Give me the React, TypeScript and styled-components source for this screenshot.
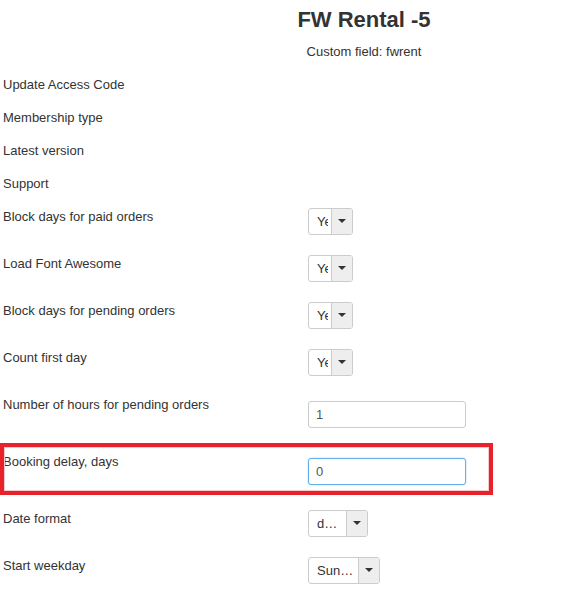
import React from "react";
import styled, { createGlobalStyle } from "styled-components";

const GlobalStyle = createGlobalStyle`
  html, body {
    margin: 0;
    padding: 0;
    background: #ffffff;
  }
  body {
    font-family: "Liberation Sans", Arial, Helvetica, sans-serif;
    font-size: 13px;
    line-height: 18.57px;
    color: #333333;
    overflow: hidden;
  }
`;

const Page = styled.div`
  width: 564px;
  display: flex;
  flex-direction: column;
`;

const Header = styled.header`
  display: flex;
  flex-direction: column;
  align-items: center;
  padding: 8px 0 0 164px;
  margin-bottom: 14px;
`;

const Title = styled.h1`
  margin: 0;
  font-size: 22px;
  line-height: 24px;
  font-weight: 700;
  color: #333333;
`;

const Subtitle = styled.div`
  margin-top: 11px;
  font-size: 13px;
  line-height: 18.57px;
  color: #333333;
`;

const Form = styled.div`
  display: flex;
  flex-direction: column;
`;

const Row = styled.div<{ $height: number }>`
  position: relative;
  display: grid;
  grid-template-columns: 305px 1fr;
  align-items: start;
  height: ${(p) => p.$height}px;
  padding-left: 3px;
`;

const Label = styled.div`
  font-size: 13px;
  line-height: 18.57px;
  color: #333333;
  white-space: nowrap;
`;

const Control = styled.div<{ $offset?: number }>`
  display: flex;
  margin-top: ${(p) => p.$offset ?? 0}px;
`;

const Highlight = styled.div`
  position: absolute;
  left: 0;
  top: -10px;
  width: 493px;
  height: 52px;
  box-sizing: border-box;
  border: 4px solid #e8212b;
  box-shadow: inset 0 0 0 1px #f6c9cb;
  pointer-events: none;
`;

const SelectBox = styled.div<{ $width: number }>`
  display: flex;
  box-sizing: border-box;
  width: ${(p) => p.$width}px;
  height: 27px;
  border: 1px solid #cccccc;
  border-radius: 3px;
  background: #ffffff;
  overflow: hidden;
`;

const SelectValue = styled.span<{ $clip?: boolean }>`
  flex: 1;
  min-width: 0;
  padding: 0 0 0 8px;
  margin-right: ${(p) => (p.$clip ? 3 : 2)}px;
  font-size: 13px;
  line-height: 25px;
  color: #333333;
  white-space: nowrap;
  overflow: hidden;
  text-overflow: ${(p) => (p.$clip ? "clip" : "ellipsis")};
`;

const SelectButton = styled.span`
  flex: 0 0 20px;
  display: flex;
  align-items: center;
  justify-content: center;
  border-left: 1px solid #cccccc;
  background: #eeeeee;
`;

const Caret = styled.span`
  width: 0;
  height: 0;
  border-left: 4px solid transparent;
  border-right: 4px solid transparent;
  border-top: 4px solid #333333;
`;

const TextInput = styled.input<{ $focused?: boolean }>`
  box-sizing: border-box;
  width: 158px;
  height: 27px;
  padding: 0 7px;
  font-family: "Liberation Sans", Arial, Helvetica, sans-serif;
  font-size: 13px;
  color: #555555;
  background: #ffffff;
  border: 1px solid ${(p) => (p.$focused ? "#66afe9" : "#cccccc")};
  border-radius: 3px;
  outline: none;
  box-shadow: ${(p) => (p.$focused ? "0 0 2px rgba(102,175,233,0.5)" : "none")};
`;

type Field =
  | { kind: "text"; label: string; height: number }
  | { kind: "select"; label: string; height: number; value: string; width: number; clip?: boolean }
  | { kind: "input"; label: string; height: number; value: string; highlight?: boolean };

const fields: Field[] = [
  { kind: "text", label: "Update Access Code", height: 33 },
  { kind: "text", label: "Membership type", height: 33 },
  { kind: "text", label: "Latest version", height: 33 },
  { kind: "text", label: "Support", height: 33 },
  { kind: "select", label: "Block days for paid orders", height: 47, value: "Yes", width: 45, clip: true },
  { kind: "select", label: "Load Font Awesome", height: 47, value: "Yes", width: 45, clip: true },
  { kind: "select", label: "Block days for pending orders", height: 47, value: "Yes", width: 45, clip: true },
  { kind: "select", label: "Count first day", height: 47, value: "Yes", width: 45, clip: true },
  { kind: "input", label: "Number of hours for pending orders", height: 57, value: "1" },
  { kind: "input", label: "Booking delay, days", height: 57, value: "0", highlight: true },
  { kind: "select", label: "Date format", height: 47, value: "dd/mm/yyyy", width: 60 },
  { kind: "select", label: "Start weekday", height: 36, value: "Sunday", width: 72 },
];

const Select = ({ value, width, clip }: { value: string; width: number; clip?: boolean }) => (
  <SelectBox $width={width}>
    <SelectValue $clip={clip}>{value}</SelectValue>
    <SelectButton>
      <Caret />
    </SelectButton>
  </SelectBox>
);

export default function App() {
  return (
    <>
      <GlobalStyle />
      <Page>
        <Header>
          <Title>FW Rental -5</Title>
          <Subtitle>Custom field: fwrent</Subtitle>
        </Header>
        <Form>
          {fields.map((f) => (
            <Row key={f.label} $height={f.height}>
              <Label>{f.label}</Label>
              {f.kind === "select" && (
                <Control>
                  <Select value={f.value} width={f.width} clip={f.clip} />
                </Control>
              )}
              {f.kind === "input" && (
                <Control $offset={5}>
                  <TextInput $focused={f.highlight} defaultValue={f.value} readOnly />
                </Control>
              )}
              {f.kind === "input" && f.highlight && <Highlight />}
            </Row>
          ))}
        </Form>
      </Page>
    </>
  );
}
